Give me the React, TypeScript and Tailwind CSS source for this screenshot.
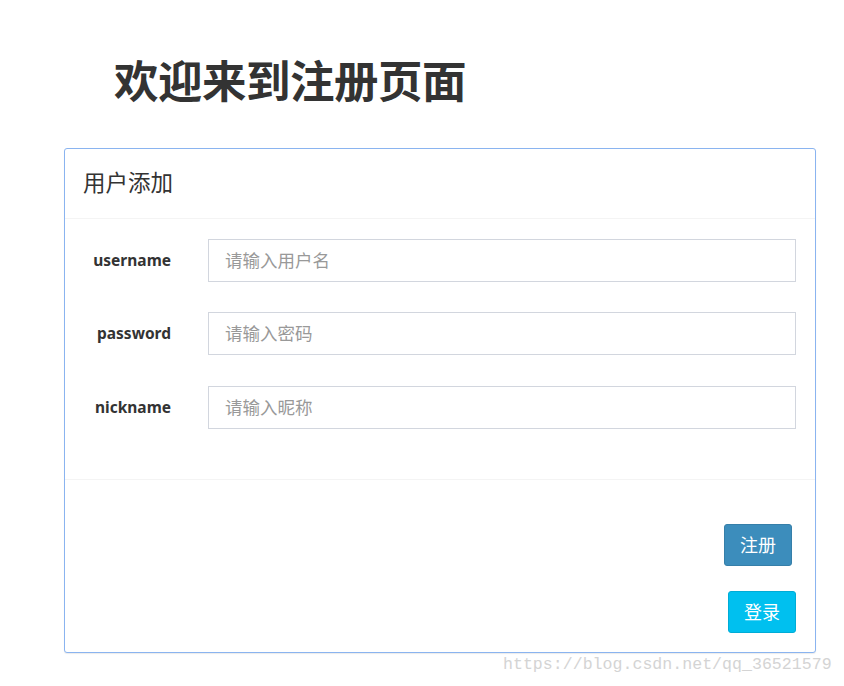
import React from "react";

export default function App() {
  const fields = [
    { label: "username", ph: "请输入用户名", mt: "mt-0" },
    { label: "password", ph: "请输入密码", mt: "mt-[30px]" },
    { label: "nickname", ph: "请输入昵称", mt: "mt-[31px]" },
  ];
  return (
    <div
      className="relative w-[844px] h-[686px] bg-white overflow-hidden text-[#333]"
      style={{ fontFamily: '"Noto Sans", "Noto Sans CJK SC", sans-serif' }}
    >
      <div className="pl-[114px] pt-[48px] h-[148px]">
        <h1 className="text-[44.5px] leading-[66px] font-bold text-[#333] tracking-[-0.5px]">
          欢迎来到注册页面
        </h1>
      </div>
      <div className="ml-[64px] w-[752px] h-[505px] border border-[#8ab4f0] rounded-[3px] bg-white flex flex-col shadow-[0_1px_1px_rgba(0,0,0,0.08)]">
        <div className="h-[70px] px-[18px] flex items-center border-b border-[#f4f4f4]">
          <span className="text-[22.5px] text-[#333] leading-none">用户添加</span>
        </div>
        <div className="pt-[20px] pb-[50px] pr-[19px] flex flex-col border-b border-[#f4f4f4]">
          {fields.map((f) => (
            <div key={f.label} className={`${f.mt} flex items-center h-[43px]`}>
              <label className="w-[106px] text-right text-[15.5px] font-bold text-[#333]">
                {f.label}
              </label>
              <div className="ml-[37px] flex-1 h-[43px] border border-[#d2d6de] flex items-center px-[16px]">
                <span className="text-[17.5px] text-[#999]">{f.ph}</span>
              </div>
            </div>
          ))}
        </div>
        <div className="flex-1 flex flex-col items-end pt-[44px]">
          <button className="mr-[23px] w-[68px] h-[42px] rounded-[3px] bg-[#3c8dbc] border border-[#367fa9] text-white text-[18px] flex items-center justify-center">
            注册
          </button>
          <button className="mt-[25px] mr-[19px] w-[68px] h-[42px] rounded-[3px] bg-[#00c0ef] border border-[#00acd6] text-white text-[18px] flex items-center justify-center">
            登录
          </button>
        </div>
      </div>
      <div
        className="absolute left-[503px] top-[653px] text-[16.6px] text-[#d4d4d4] leading-[24px]"
        style={{ fontFamily: '"Liberation Mono", monospace' }}
      >
        https://blog.csdn.net/qq_36521579
      </div>
    </div>
  );
}
